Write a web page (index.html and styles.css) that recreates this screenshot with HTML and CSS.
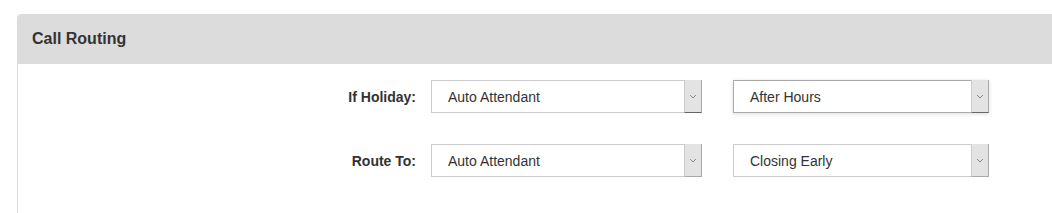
FILE: index.html
```html
<!DOCTYPE html>
<html>
<head>
<meta charset="utf-8">
<link rel="stylesheet" href="styles.css">
</head>
<body>
<div class="panel">
  <div class="panel-head">Call Routing</div>
  <div class="panel-body">
    <div class="row">
      <div class="label">If Holiday:</div>
      <div class="select sel-a">
        <span class="val">Auto Attendant</span>
        <span class="arrow dark"><svg width="8" height="5" viewBox="0 0 8 5"><path d="M1 1 L4 4 L7 1" fill="none" stroke="#888" stroke-width="1"/></svg></span>
      </div>
      <div class="select sel-b focus">
        <span class="val">After Hours</span>
        <span class="arrow dark"><svg width="8" height="5" viewBox="0 0 8 5"><path d="M1 1 L4 4 L7 1" fill="none" stroke="#888" stroke-width="1"/></svg></span>
      </div>
    </div>
    <div class="row">
      <div class="label">Route To:</div>
      <div class="select sel-a">
        <span class="val">Auto Attendant</span>
        <span class="arrow"><svg width="8" height="5" viewBox="0 0 8 5"><path d="M1 1 L4 4 L7 1" fill="none" stroke="#888" stroke-width="1"/></svg></span>
      </div>
      <div class="select sel-b">
        <span class="val">Closing Early</span>
        <span class="arrow"><svg width="8" height="5" viewBox="0 0 8 5"><path d="M1 1 L4 4 L7 1" fill="none" stroke="#888" stroke-width="1"/></svg></span>
      </div>
    </div>
  </div>
</div>
</body>
</html>
```

FILE: styles.css
```css
html, body {
  margin: 0;
  padding: 0;
  background: #fff;
  font-family: "Liberation Sans", Arial, sans-serif;
  color: #333;
  overflow: hidden;
}
.panel {
  margin: 14px 0 0 17px;
  border-left: 1px solid #dcdcdc;
  border-top-left-radius: 4px;
}
.panel-head {
  background: #dcdcdc;
  height: 50px;
  box-sizing: border-box;
  padding: 0 0 0 14px;
  display: flex;
  align-items: center;
  font-size: 16px;
  font-weight: bold;
  color: #333;
  border-top-left-radius: 4px;
}
.panel-body {
  padding: 16px 0 40px 0;
  display: flex;
  flex-direction: column;
  gap: 31px;
}
.row {
  display: flex;
  align-items: center;
  height: 33px;
}
.label {
  width: 398px;
  text-align: right;
  font-size: 14px;
  font-weight: bold;
  color: #333;
  margin-right: 15px;
}
.select {
  height: 33px;
  box-sizing: border-box;
  border: 1px solid #ccc;
  display: flex;
  align-items: stretch;
  background: #fff;
}
.sel-a { width: 271px; margin-right: 31px; }
.sel-b { width: 256px; }
.select.focus {
  border-color: #aaa;
  box-shadow: 0 1px 4px rgba(0,0,0,0.15);
}
.val {
  flex: 1;
  display: flex;
  align-items: center;
  padding-left: 16px;
  font-size: 14px;
  color: #333;
}
.arrow {
  width: 16px;
  background: #e3e3e3;
  border-left: 1px solid #ccc;
  border-right: 1px solid #aaa;
  border-bottom: 1px solid #aaa;
  margin: -1px -1px -1px 0;
  display: flex;
  align-items: center;
  justify-content: center;
}
.arrow.dark {
  border-bottom: 1px solid #666;
}
```
